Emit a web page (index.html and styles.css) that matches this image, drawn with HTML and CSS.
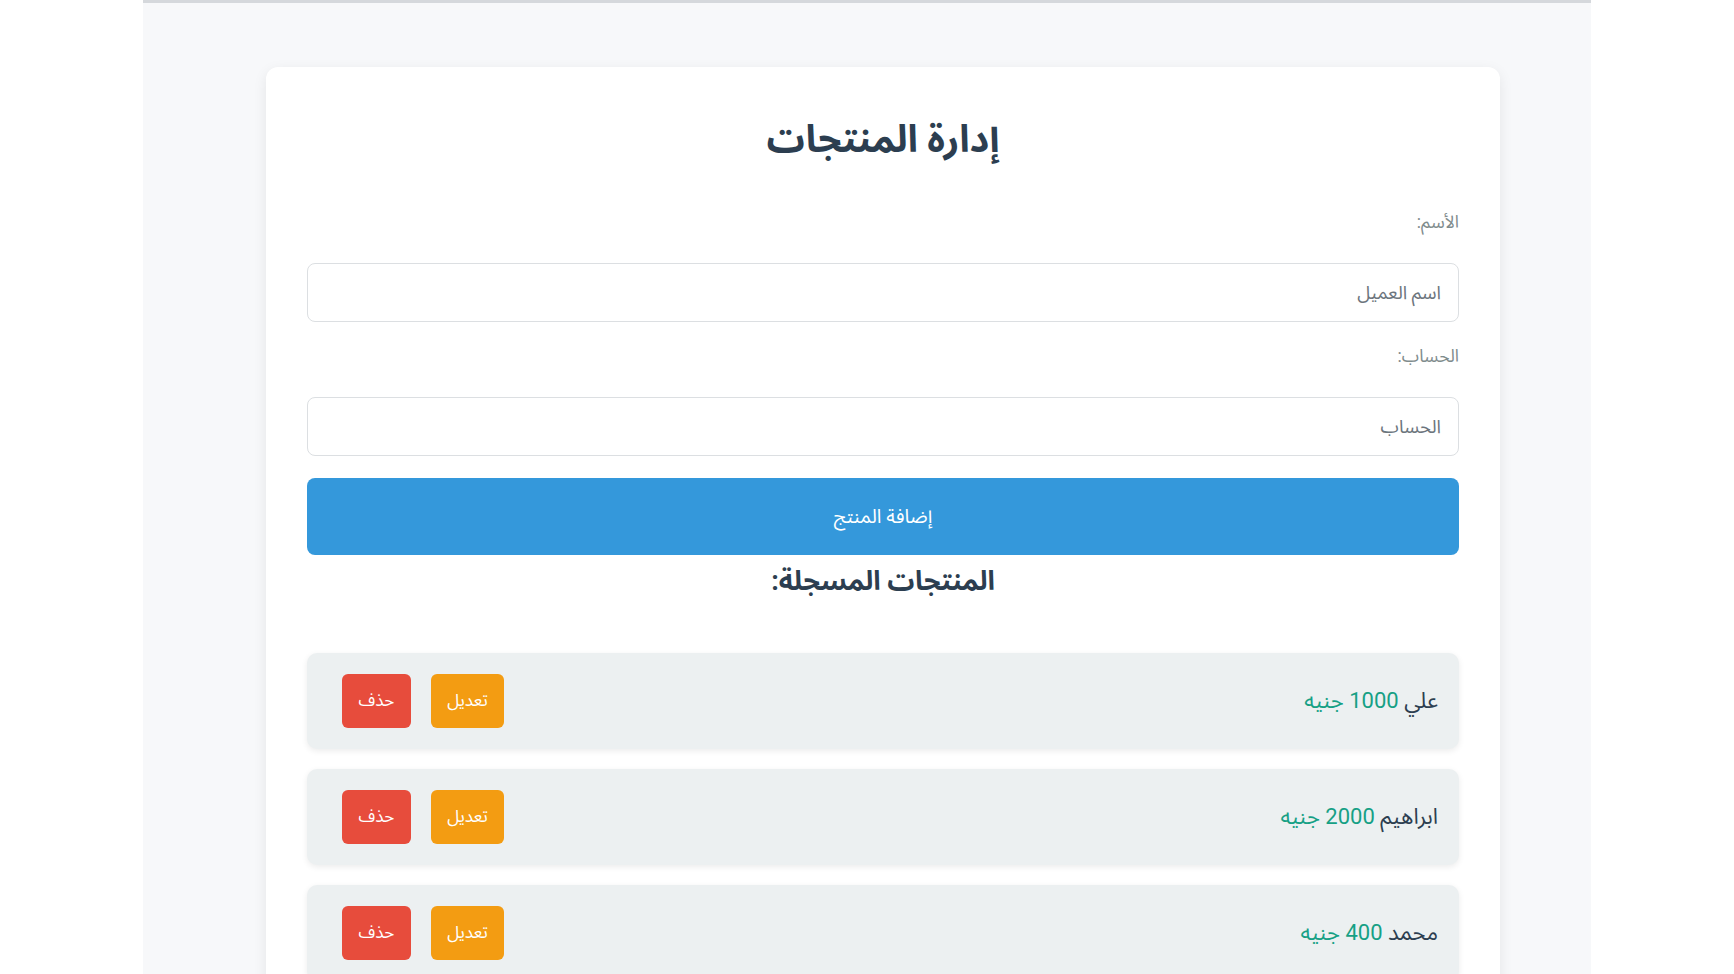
FILE: index.html
```html
<!DOCTYPE html>
<html lang="ar" dir="rtl">
<head>
    <meta charset="UTF-8">
    <meta name="viewport" content="width=device-width, initial-scale=1.0">
    <title>إدارة المنتجات</title>
    <link rel="stylesheet" href="styles.css">
</head>
<body>
    <div class="page">
        <div class="container">
            <h1>إدارة المنتجات</h1>
            <form class="product-form">
                <label for="name">الأسم:</label>
                <input type="text" id="name" placeholder="اسم العميل">
                <label for="amount">الحساب:</label>
                <input type="number" id="amount" placeholder="الحساب">
                <button type="button" class="add-btn">إضافة المنتج</button>
            </form>
            <h2>المنتجات المسجلة:</h2>
            <ul class="product-list">
                <li class="product-item">
                    <span class="product-info">علي <span class="price">1000 جنيه</span></span>
                    <div class="actions">
                        <button class="edit-btn">تعديل</button>
                        <button class="delete-btn">حذف</button>
                    </div>
                </li>
                <li class="product-item">
                    <span class="product-info">ابراهيم <span class="price">2000 جنيه</span></span>
                    <div class="actions">
                        <button class="edit-btn">تعديل</button>
                        <button class="delete-btn">حذف</button>
                    </div>
                </li>
                <li class="product-item">
                    <span class="product-info">محمد <span class="price">400 جنيه</span></span>
                    <div class="actions">
                        <button class="edit-btn">تعديل</button>
                        <button class="delete-btn">حذف</button>
                    </div>
                </li>
            </ul>
        </div>
    </div>
</body>
</html>
```

FILE: styles.css
```css
html {
    background: #fff;
}

body {
    font-family: Roboto, "Noto Sans Arabic", "Noto Naskh Arabic", "DejaVu Sans", sans-serif;
    margin: 0;
    color: #2c3e50;
}

.page {
    width: 1448px;
    min-height: 974px;
    margin: 0 auto;
    background-color: #f7f8fa;
    border-top: 3px solid #d5d8dc;
    box-sizing: border-box;
    padding-top: 64px;
    overflow: hidden;
}

.container {
    width: 1234px;
    margin-right: 91px;
    background: white;
    padding: 41px 41px 40px;
    box-sizing: border-box;
    border-radius: 12px;
    box-shadow: 0 4px 14px rgba(0,0,0,0.08);
}

h1 {
    text-align: center;
    font-size: 38px;
    line-height: 44px;
    margin: 9px 0 0;
    color: #2c3e50;
}

.product-form {
    display: flex;
    flex-direction: column;
    margin-top: 51px;
}

label {
    font-size: 17.5px;
    line-height: 20px;
    color: #7f8c8d;
    margin-bottom: 31px;
}

input {
    height: 59px;
    padding: 0 17px;
    border: 1px solid #dcdfe2;
    border-radius: 8px;
    font-family: inherit;
    font-size: 18.5px;
    color: #2c3e50;
    box-sizing: border-box;
    margin-bottom: 24px;
}

input::placeholder {
    color: #6c757d;
}

#amount {
    margin-bottom: 22px;
}

.add-btn {
    height: 77px;
    background-color: #3498db;
    color: white;
    border: none;
    border-radius: 8px;
    font-family: inherit;
    font-size: 19.5px;
    cursor: pointer;
}

.add-btn:hover {
    background-color: #2980b9;
}

h2 {
    text-align: center;
    font-size: 27px;
    line-height: 34px;
    margin: 9px 0 0;
    color: #2c3e50;
}

.product-list {
    list-style: none;
    margin: 55px 0 0;
    padding: 0;
}

.product-item {
    display: flex;
    justify-content: space-between;
    align-items: center;
    height: 96px;
    padding: 0 21px 0 35px;
    margin-bottom: 20px;
    background: #ecf0f1;
    border-radius: 10px;
    box-shadow: 0 2px 6px rgba(0,0,0,0.08);
    box-sizing: border-box;
}

.product-info {
    font-size: 22px;
    color: #2c3e50;
}

.price {
    color: #16a085;
}

.actions {
    display: flex;
    gap: 20px;
}

.actions button {
    height: 54px;
    border: none;
    border-radius: 6px;
    color: #fff;
    font-family: inherit;
    font-size: 17px;
    cursor: pointer;
}

.edit-btn {
    width: 73px;
    background-color: #f39c12;
}

.delete-btn {
    width: 69px;
    background-color: #e74c3c;
}
```
